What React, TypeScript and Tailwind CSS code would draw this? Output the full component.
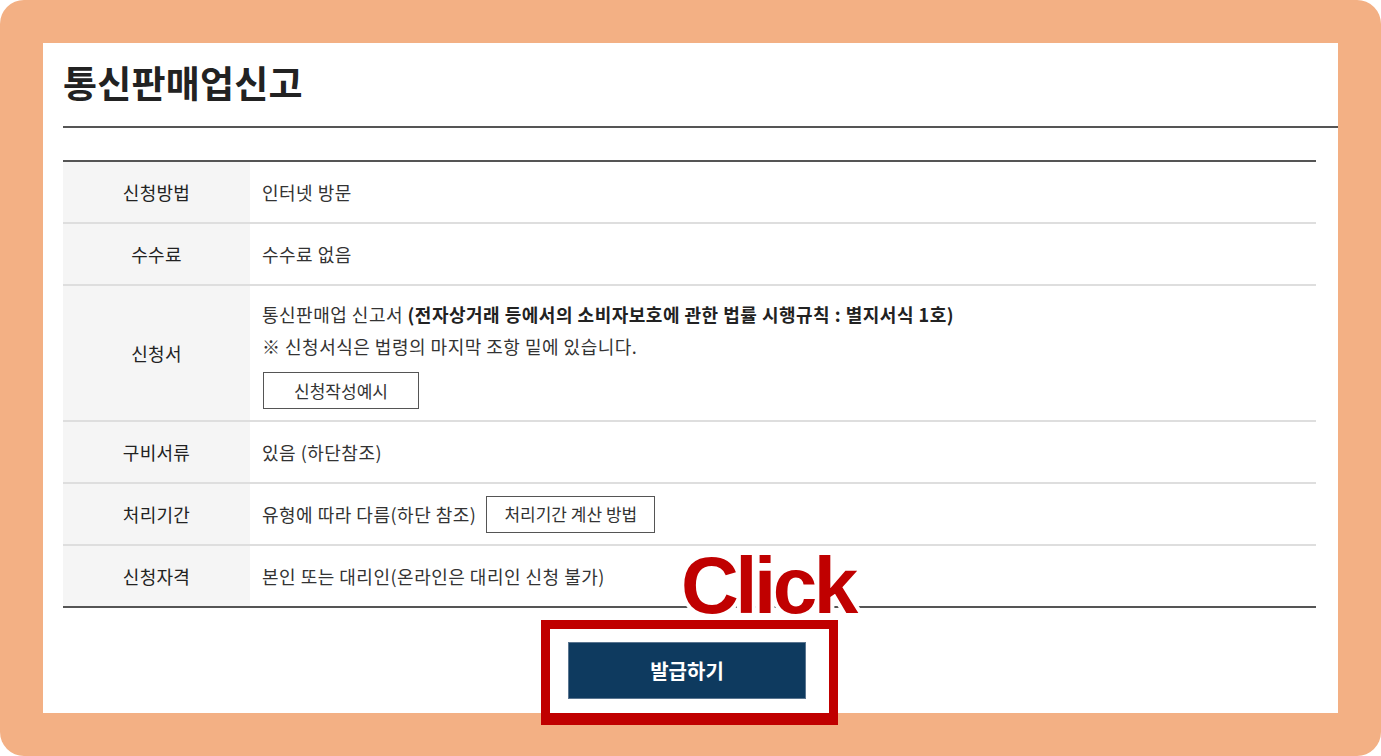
const font = "font-['Noto_Sans_CJK_KR','Noto_Sans',sans-serif]";

function Row({
  label,
  children,
  last,
  tall,
}: {
  label: string;
  children: React.ReactNode;
  last?: boolean;
  tall?: boolean;
}) {
  return (
    <div
      className={`flex ${last ? "border-b-2 border-[#555]" : "border-b-2 border-[#dedede]"} ${
        tall ? "min-h-[136px]" : "h-[62px]"
      }`}
    >
      <div className="flex w-[187px] shrink-0 items-center justify-center bg-[#f5f5f5] text-[18px] tracking-[0.3px] text-[#222]">
        {label}
      </div>
      <div className="flex flex-1 flex-col justify-center pl-[12px] text-[18px] tracking-[0.5px] text-[#333]">
        {children}
      </div>
    </div>
  );
}

export default function App() {
  return (
    <div className={`relative h-[756px] w-[1381px] bg-white ${font}`}>
      <div className="h-full w-full rounded-[24px] bg-[#f3b084] p-[43px]">
        <div className="flex h-full flex-col bg-white pl-[20px]">
          <div className="border-b-2 border-[#555] pt-[15px] pb-[20px]">
            <h1 className="text-[37px] font-bold leading-[48px] tracking-[0.2px] text-[#222]">
              통신판매업신고
            </h1>
          </div>

          <div className="mt-[32px] mr-[22px] border-t-2 border-[#555]">
            <Row label="신청방법">인터넷 방문</Row>
            <Row label="수수료">수수료 없음</Row>
            <Row label="신청서" tall>
              <div className="pt-[11px] pb-[10px]">
                <p className="leading-[32px]">
                  통신판매업 신고서{" "}
                  <span className="font-bold text-[#222]">
                    (전자상거래 등에서의 소비자보호에 관한 법률 시행규칙 : 별지서식 1호)
                  </span>
                </p>
                <p className="leading-[32px]">※ 신청서식은 법령의 마지막 조항 밑에 있습니다.</p>
                <button className="mt-[10px] ml-px h-[37px] w-[156px] border border-[#555] bg-white text-[17px] tracking-normal text-[#333]">
                  신청작성예시
                </button>
              </div>
            </Row>
            <Row label="구비서류">있음 (하단참조)</Row>
            <Row label="처리기간">
              <div className="flex items-center">
                <span>유형에 따라 다름(하단 참조)</span>
                <button className="ml-[10px] h-[37px] border border-[#555] bg-white px-[17px] text-[17px] tracking-normal text-[#333]">
                  처리기간 계산 방법
                </button>
              </div>
            </Row>
            <Row label="신청자격" last>
              본인 또는 대리인(온라인은 대리인 신청 불가)
            </Row>
          </div>

          <div className="mt-[34px] mr-[22px] flex justify-center pr-[5px]">
            <button className="h-[57px] w-[238px] border border-[#5a7590] bg-[#0e3a5f] text-[20px] font-bold text-white">
              발급하기
            </button>
          </div>
        </div>
      </div>

      <div className="absolute top-[546px] left-[681px] font-['Liberation_Sans',Arial,sans-serif] text-[80px] leading-none font-bold tracking-[-3.5px] text-[#c00000] [-webkit-text-stroke:8px_#fff] [paint-order:stroke_fill]">
        Click
      </div>
      <div className="pointer-events-none absolute top-[620px] left-[541px] h-[105px] w-[297px] border-[9px] border-b-[12px] border-[#c00000]" />
    </div>
  );
}
